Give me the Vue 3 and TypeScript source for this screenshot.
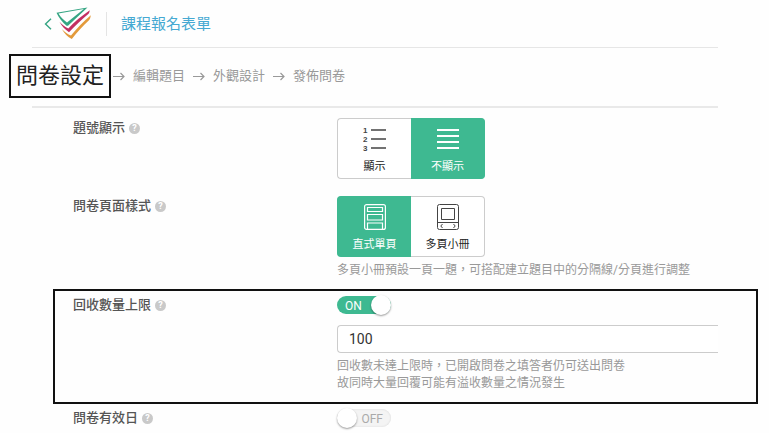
<script setup lang="ts">
import { ref } from 'vue'

interface Step {
  label: string
  href: string
}

const steps: Step[] = [
  { label: '問卷設定', href: '#settings' },
  { label: '編輯題目', href: '#questions' },
  { label: '外觀設計', href: '#appearance' },
  { label: '發佈問卷', href: '#publish' },
]
const currentStep = 0

const numbering = ref<'show' | 'hide'>('hide')
const pageStyle = ref<'single' | 'booklet'>('single')
const limitOn = ref<boolean>(true)
const limit = ref<string>('100')
const validityOn = ref<boolean>(false)
</script>

<template>
  <div class="page" lang="zh-Hant">
    <header class="header">
      <a class="back" href="#back" aria-label="返回">
        <svg width="8" height="12" viewBox="0 0 8 12" fill="none" stroke="#35a583" stroke-width="1.4">
          <path d="M7 .7 1.5 6 7 11.3" />
        </svg>
      </a>
      <a class="logo" href="#home" aria-label="首頁">
        <svg width="36" height="34" viewBox="0 0 36 34">
          <path fill="#35a583" fill-rule="evenodd" d="M.5 5.800 31.500 .4 12 18.800 10.500 18.800C6.500 15.500 2.500 10.500 .5 5.800ZM2.500 6.600C4.800 10.300 7.600 13.300 11 15.500L27.800 2Z" />
          <path fill="#c32f62" d="M3.500 14.800C6.500 18 9 20 12.300 21.500C18.500 14.800 26 8.500 33.800 3.200C33.600 4.700 33.200 5.800 32.600 6.700C26 12 19.500 18.300 13 25.200C9 22.600 6 19.300 3.500 14.800Z" />
          <path fill="#e39a3b" d="M5.800 22C9 25.200 11.800 27.200 15 28.600C20.800 21.200 27.500 14.500 34.800 8.200C34.500 10.400 34 12 33 13.300C27 18.800 21.500 24.800 15.800 32C11.600 30 8.500 26.700 5.800 22Z" />
        </svg>
      </a>
      <h1 class="title">課程報名表單</h1>
    </header>

    <nav class="steps" aria-label="步驟">
      <ol class="step-list">
        <li v-for="(step, i) in steps" :key="step.href" class="step">
          <svg v-if="i > 0" class="arrow" width="12" height="9" viewBox="0 0 12 9" fill="none" stroke="#999" stroke-width="1.2">
            <path d="M0 4.500H11M7.500 1 11 4.500 7.500 8" />
          </svg>
          <a
            class="step-link"
            :class="{ current: i === currentStep }"
            :href="step.href"
            :aria-current="i === currentStep ? 'step' : undefined"
          >{{ step.label }}</a>
        </li>
      </ol>
    </nav>

    <main class="settings">
      <section class="row">
        <div class="name">
          <span id="numbering-label">題號顯示</span>
          <button class="help" type="button" aria-label="說明">?</button>
        </div>
        <div class="field">
          <div class="choices" role="radiogroup" aria-labelledby="numbering-label">
            <label class="choice">
              <input v-model="numbering" type="radio" name="numbering" value="show" />
              <svg width="24" height="26" viewBox="0 0 24 26" fill="none" stroke="currentColor">
                <path stroke-width="1.600" d="M8 4H23M8 13H23M8 22H23" />
                <g class="digits" fill="currentColor" stroke="none">
                  <text x="0" y="7">1</text>
                  <text x="0" y="16">2</text>
                  <text x="0" y="25">3</text>
                </g>
              </svg>
              <span>顯示</span>
            </label>
            <label class="choice">
              <input v-model="numbering" type="radio" name="numbering" value="hide" />
              <svg width="22" height="26" viewBox="0 0 22 26" fill="none" stroke="currentColor" stroke-width="2">
                <path d="M0 4H22M0 10H22M0 16H22M0 22H22" />
              </svg>
              <span>不顯示</span>
            </label>
          </div>
        </div>
      </section>

      <section class="row">
        <div class="name">
          <span id="style-label">問卷頁面樣式</span>
          <button class="help" type="button" aria-label="說明">?</button>
        </div>
        <div class="field">
          <div class="choices" role="radiogroup" aria-labelledby="style-label">
            <label class="choice">
              <input v-model="pageStyle" type="radio" name="page-style" value="single" />
              <svg width="22" height="26" viewBox="0 0 22 26" fill="none" stroke="currentColor" stroke-width="1.200">
                <rect x=".6" y=".6" width="20.800" height="24.800" rx="2" />
                <path d="M3.500 3.500H18.500V7.500H3.500ZM3.500 10.500H18.500V16H3.500ZM3.500 25V19H18.500V25" />
              </svg>
              <span>直式單頁</span>
            </label>
            <label class="choice">
              <input v-model="pageStyle" type="radio" name="page-style" value="booklet" />
              <svg width="22" height="26" viewBox="0 0 22 26" fill="none" stroke="currentColor">
                <rect x=".5" y=".5" width="21" height="25" rx="2" />
                <path d="M4.500 4.500H17.500V15.500H4.500ZM.5 18.500H21.500M5.500 20 3.800 22 5.500 24M16.500 20 18.200 22 16.500 24" />
              </svg>
              <span>多頁小冊</span>
            </label>
          </div>
          <p class="hint">多頁小冊預設一頁一題，可搭配建立題目中的分隔線/分頁進行調整</p>
        </div>
      </section>

      <section class="row highlighted">
        <div class="name">
          <label for="limit-switch">回收數量上限</label>
          <button class="help" type="button" aria-label="說明">?</button>
        </div>
        <div class="field">
          <label class="toggle" :class="{ on: limitOn }">
            <input id="limit-switch" v-model="limitOn" type="checkbox" role="switch" />
            <span class="track">{{ limitOn ? 'ON' : 'OFF' }}</span>
            <span class="knob"></span>
          </label>
          <input v-model="limit" class="limit" type="text" inputmode="numeric" aria-label="回收數量上限" />
          <p class="hint">回收數未達上限時，已開啟問卷之填答者仍可送出問卷<br />故同時大量回覆可能有溢收數量之情況發生</p>
        </div>
      </section>

      <section class="row">
        <div class="name">
          <label for="validity-switch">問卷有效日</label>
          <button class="help" type="button" aria-label="說明">?</button>
        </div>
        <div class="field">
          <label class="toggle" :class="{ on: validityOn }">
            <input id="validity-switch" v-model="validityOn" type="checkbox" role="switch" />
            <span class="track">{{ validityOn ? 'ON' : 'OFF' }}</span>
            <span class="knob"></span>
          </label>
        </div>
      </section>
    </main>
  </div>
</template>

<style>
body {
  background: #fefefe;
}
</style>

<style scoped>
.page {
  font-family: Roboto, 'Noto Sans CJK TC', sans-serif;
  color: #444;
}

.page * {
  box-sizing: border-box;
}

a {
  color: inherit;
  text-decoration: none;
}

.header {
  display: flex;
  align-items: center;
  height: 48px;
  margin: 0 51px 0 32px;
  padding: 1px 0 0 12px;
  border-bottom: 1px solid #e6e6e6;
}

.back,
.logo {
  display: flex;
}

.logo {
  margin: 0 14px 0 4px;
}

.title {
  margin: 0;
  padding-left: 14px;
  border-left: 1px solid #e4e4e4;
  font-size: 15px;
  font-weight: 400;
  line-height: 24px;
  color: #45a9d2;
}

.steps {
  margin: 0 51px 0 32px;
  padding: 6px 0 8px;
  border-bottom: 2px solid #e9e9e9;
}

.step-list {
  display: flex;
  align-items: center;
  gap: 8px;
  margin: 0 0 0 -23px;
  padding: 0;
  list-style: none;
}

.step {
  display: flex;
  align-items: center;
  gap: 8px;
  font-size: 13px;
  line-height: 22px;
  color: #999;
  white-space: nowrap;
}

.current {
  margin-right: -6px;
  padding: 0 5px;
  border: 2px solid #111;
  font-size: 22px;
  line-height: 40px;
  color: #222;
}

.settings {
  display: flex;
  flex-direction: column;
  padding: 10px 11px 0 53px;
}

.row {
  display: grid;
  grid-template-columns: 264px minmax(0, 1fr);
  align-items: start;
  padding: 0 40px 0 20px;
  margin-bottom: 17px;
}

.row:nth-child(2) {
  margin-bottom: 10px;
}

.row.highlighted {
  margin-bottom: 4px;
  padding: 4px 38px 10px 18px;
  border: 2px solid #111;
}

.name {
  display: flex;
  align-items: center;
  gap: 4px;
  font-size: 13px;
  font-weight: 500;
  line-height: 20px;
  color: #555;
}

.help {
  display: grid;
  place-items: center;
  width: 11px;
  height: 11px;
  padding: 0;
  border: 0;
  border-radius: 50%;
  background: #c9c9c9;
  color: #fff;
  font: 700 9px/11px Roboto, sans-serif;
}

.field {
  display: flex;
  flex-direction: column;
  align-items: flex-start;
}

.choices {
  display: flex;
}

.choice {
  display: flex;
  flex-direction: column;
  align-items: center;
  gap: 7px;
  width: 74px;
  padding: 7px 0 4px;
  border: 1px solid #ccc;
  background: #fff;
  color: #444;
  font-size: 11px;
  line-height: 15px;
  cursor: pointer;
}

.choice:first-child {
  border-right: 0;
  border-radius: 4px 0 0 4px;
}

.choice:last-child {
  border-left: 0;
  border-radius: 0 4px 4px 0;
}

.choice span {
  color: #222;
}

.choice:has(input:checked) {
  border-color: #3eb991;
  background: #3eb991;
  color: #fff;
}

.choice:has(input:checked) span {
  color: #fff;
}

.choice input,
.toggle input {
  position: absolute;
  width: 1px;
  height: 1px;
  margin: 0;
  opacity: 0;
}

.digits {
  font: 700 8px 'Liberation Sans', sans-serif;
}

.hint {
  margin: 5px 0 0;
  font-size: 12px;
  line-height: 17px;
  color: #999;
}

.toggle {
  position: relative;
  display: flex;
  align-items: center;
  width: 54px;
  height: 20px;
  cursor: pointer;
}

.track {
  width: 100%;
  height: 18px;
  padding: 0 8px;
  border-radius: 9px;
  background: #f4f4f4;
  box-shadow: inset 0 0 2px #d4d4d4;
  color: #aaa;
  font-size: 12px;
  line-height: 20px;
  text-align: right;
}

.knob {
  position: absolute;
  top: 0;
  left: 0;
  width: 20px;
  height: 20px;
  border-radius: 50%;
  background: #fff;
  box-shadow: 0 1px 2px rgba(0, 0, 0, 0.4);
}

.toggle.on .track {
  background: #3eb991;
  box-shadow: none;
  color: #fff;
  text-align: left;
}

.toggle.on .knob {
  right: 0;
  left: auto;
}

.limit {
  width: 100%;
  height: 28px;
  margin-top: 10px;
  padding: 0 11px;
  border: 1px solid #ccc;
  border-right: 0;
  border-radius: 4px 0 0 4px;
  background: #fff;
  color: #333;
  font: 14px Roboto, sans-serif;
}
</style>
